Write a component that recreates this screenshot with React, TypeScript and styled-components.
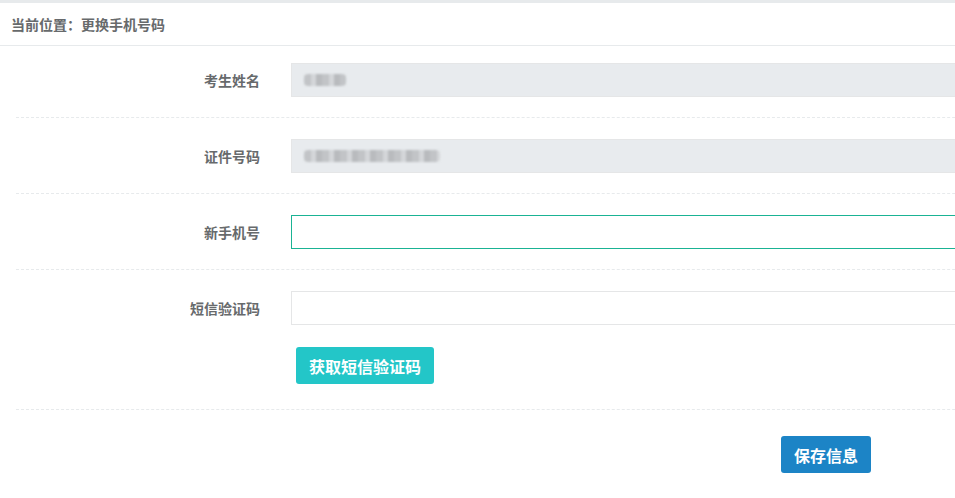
import * as React from 'react'
import styled, { createGlobalStyle } from 'styled-components'

const GlobalStyle = createGlobalStyle`
  html, body {
    margin: 0;
    padding: 0;
    background: #fff;
    overflow: hidden;
  }
  body {
    font-family: "Noto Sans CJK SC", "Noto Sans", sans-serif;
    color: #676a6c;
  }
`

const Page = styled.div`
  width: 955px;
  height: 498px;
  overflow: hidden;
  border-top: 3px solid #e7eaec;
  box-sizing: border-box;
`

const Breadcrumb = styled.div`
  height: 43px;
  line-height: 42px;
  padding-left: 11px;
  font-size: 14px;
  font-weight: bold;
  color: #676a6c;
  border-bottom: 1px solid #e7eaec;
  box-sizing: border-box;
`

const Form = styled.form`
  width: 1600px;
  padding: 17px 0 0 16px;
`

const Group = styled.div`
  display: grid;
  grid-template-columns: 259px 1fr;
  align-items: start;
`

const Label = styled.label`
  text-align: right;
  padding-right: 15px;
  font-size: 14px;
  font-weight: bold;
  line-height: 34px;
  height: 34px;
`

const Field = styled.div`
  padding-left: 16px;
  display: flex;
  flex-direction: column;
  align-items: flex-start;
  gap: 22px;
`

const ReadOnly = styled.div`
  width: 100%;
  height: 34px;
  box-sizing: border-box;
  border: 1px solid #e5e6e7;
  background: #e8ebee;
  display: flex;
  align-items: center;
  padding-left: 12px;
`

const Masked = styled.span<{ $w: number }>`
  display: inline-block;
  width: ${p => p.$w}px;
  height: 12px;
  background: repeating-linear-gradient(90deg, #c2c4c7 0 7px, #d4d6d9 7px 12px, #b9bbbe 12px 18px);
  filter: blur(1.2px);
  border-radius: 4px;
`

const TextInput = styled.input<{ $focus?: boolean }>`
  width: 100%;
  height: 34px;
  box-sizing: border-box;
  border: 1px solid ${p => (p.$focus ? '#1ab394' : '#e5e6e7')};
  background: #fff;
  outline: none;
  padding: 6px 12px;
  font-size: 14px;
  font-family: inherit;
`

const Button = styled.button<{ $kind: 'info' | 'primary' }>`
  height: 37px;
  padding: 0 13px;
  border: none;
  border-radius: 3px;
  background: ${p => (p.$kind === 'info' ? '#23c6c8' : '#1c84c6')};
  color: #fff;
  font-size: 16px;
  font-weight: 600;
  font-family: "Noto Sans CJK SC", sans-serif;
  cursor: pointer;
`

const SmsButton = styled(Button)`
  margin: 0 0 5px 5px;
`

const Dashed = styled.div`
  height: 0;
  border-top: 1px dashed #e7eaec;
  margin: 20px 0 21px;
`

const Actions = styled.div`
  padding: 5px 0 0 765px;
`

export default function App() {
  return (
    <>
      <GlobalStyle />
      <Page>
        <Breadcrumb>当前位置：更换手机号码</Breadcrumb>
        <Form onSubmit={e => e.preventDefault()}>
          <Group>
            <Label>考生姓名</Label>
            <Field>
              <ReadOnly><Masked $w={42} /></ReadOnly>
            </Field>
          </Group>
          <Dashed />
          <Group>
            <Label>证件号码</Label>
            <Field>
              <ReadOnly><Masked $w={136} /></ReadOnly>
            </Field>
          </Group>
          <Dashed />
          <Group>
            <Label>新手机号</Label>
            <Field>
              <TextInput $focus />
            </Field>
          </Group>
          <Dashed />
          <Group>
            <Label>短信验证码</Label>
            <Field>
              <TextInput />
              <SmsButton type="button" $kind="info">获取短信验证码</SmsButton>
            </Field>
          </Group>
          <Dashed />
          <Actions>
            <Button type="submit" $kind="primary">保存信息</Button>
          </Actions>
        </Form>
      </Page>
    </>
  )
}
